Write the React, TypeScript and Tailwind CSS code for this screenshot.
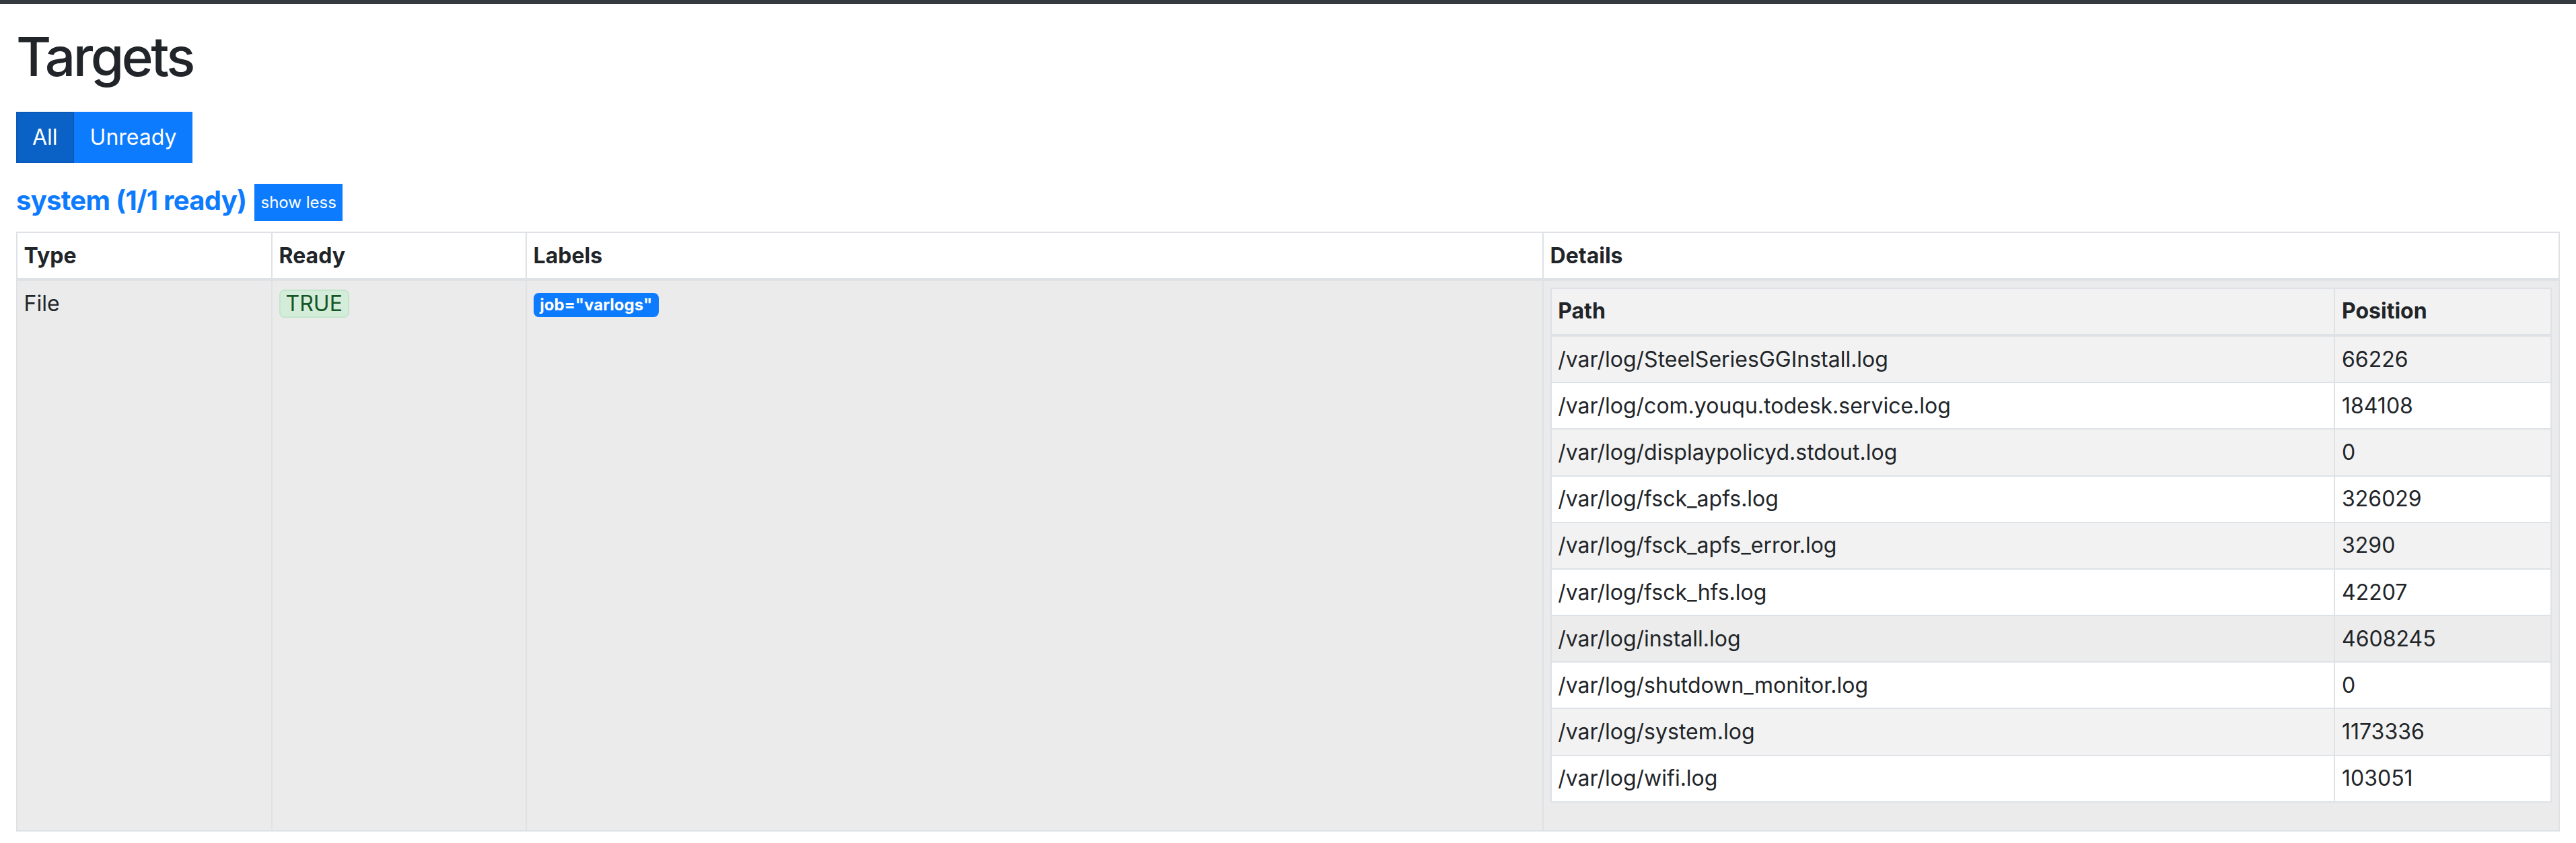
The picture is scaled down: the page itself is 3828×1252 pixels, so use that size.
import React from "react";

const files: [string, string][] = [
  ["/var/log/SteelSeriesGGInstall.log", "66226"],
  ["/var/log/com.youqu.todesk.service.log", "184108"],
  ["/var/log/displaypolicyd.stdout.log", "0"],
  ["/var/log/fsck_apfs.log", "326029"],
  ["/var/log/fsck_apfs_error.log", "3290"],
  ["/var/log/fsck_hfs.log", "42207"],
  ["/var/log/install.log", "4608245"],
  ["/var/log/shutdown_monitor.log", "0"],
  ["/var/log/system.log", "1173336"],
  ["/var/log/wifi.log", "103051"],
];

// row 7 is under the mouse in the screenshot, so it gets the hover shade
function rowBg(i: number) {
  if (i === 6) return "bg-[#ececec]";
  return i % 2 === 0 ? "bg-[#f2f2f2]" : "bg-white";
}

const th = "border-2 border-b-4 border-[#dee2e6] px-[9.6px] py-[9.6px] text-left align-top leading-[48px] font-bold";
const td = "border-2 border-[#dee2e6] px-[9.6px] py-[9.6px] text-left align-top leading-[48px]";

export default function App() {
  return (
    <div className="min-h-screen bg-white text-[#212529] text-[32px] font-['Inter','Liberation_Sans',sans-serif]">
      <div className="h-[6px] bg-[#343a40]" />

      <div className="px-[24px]">
        <h1 className="mt-[30px] mb-[34px] text-[80px] leading-[96px] font-medium tracking-[-3.5px]">Targets</h1>

        {/* filter toggle */}
        <div className="flex">
          <button className="h-[76px] px-[22px] border-2 border-[#0a58b8] bg-[#0a62c6] text-white leading-[48px]">
            All
          </button>
          <button className="h-[76px] px-[22px] border-2 border-[#0d7bfd] bg-[#0d7bfd] text-white leading-[48px]">
            Unready
          </button>
        </div>

        {/* pool header */}
        <div className="mt-[31px] flex items-start gap-[12px]">
          <a href="#job-system" className="text-[40px] leading-[49px] font-bold tracking-[-0.7px] text-[#0d7bfd]">
            system (1/1 ready)
          </a>
          <button className="h-[55px] px-[9px] py-[9.5px] bg-[#0d7bfd] text-white text-[24px] leading-[36px]">
            show less
          </button>
        </div>

        <table className="mt-[16px] w-full table-fixed border-collapse">
          <thead>
            <tr className="bg-white">
              <th className={`${th} w-[379px]`}>Type</th>
              <th className={`${th} w-[378px]`}>Ready</th>
              <th className={`${th} w-[1511px]`}>Labels</th>
              <th className={th}>Details</th>
            </tr>
          </thead>
          <tbody>
            <tr className="bg-[#ebebeb]">
              <td className={td}>File</td>
              <td className={td}>
                <span className="inline-block border-2 border-[#c3e6cb] bg-[#d4edda] text-[#155724] rounded-[8px] px-[8px] leading-[38px]">
                  TRUE
                </span>
              </td>
              <td className={td}>
                <span className="inline-block align-top mt-[8px] rounded-[8px] bg-[#0d7bfd] px-[9.6px] py-[6px] text-white text-[24px] leading-[24px] font-bold">
                  job="varlogs"
                </span>
              </td>
              <td className={td}>
                <table className="mb-[32px] w-full table-fixed border-collapse">
                  <thead>
                    <tr className="bg-[#f2f2f2]">
                      <th className={th}>Path</th>
                      <th className={`${th} w-[322px]`}>Position</th>
                    </tr>
                  </thead>
                  <tbody>
                    {files.map(([path, pos], i) => (
                      <tr key={path} className={rowBg(i)}>
                        <td className={td}>{path}</td>
                        <td className={td}>{pos}</td>
                      </tr>
                    ))}
                  </tbody>
                </table>
              </td>
            </tr>
          </tbody>
        </table>
      </div>
    </div>
  );
}
